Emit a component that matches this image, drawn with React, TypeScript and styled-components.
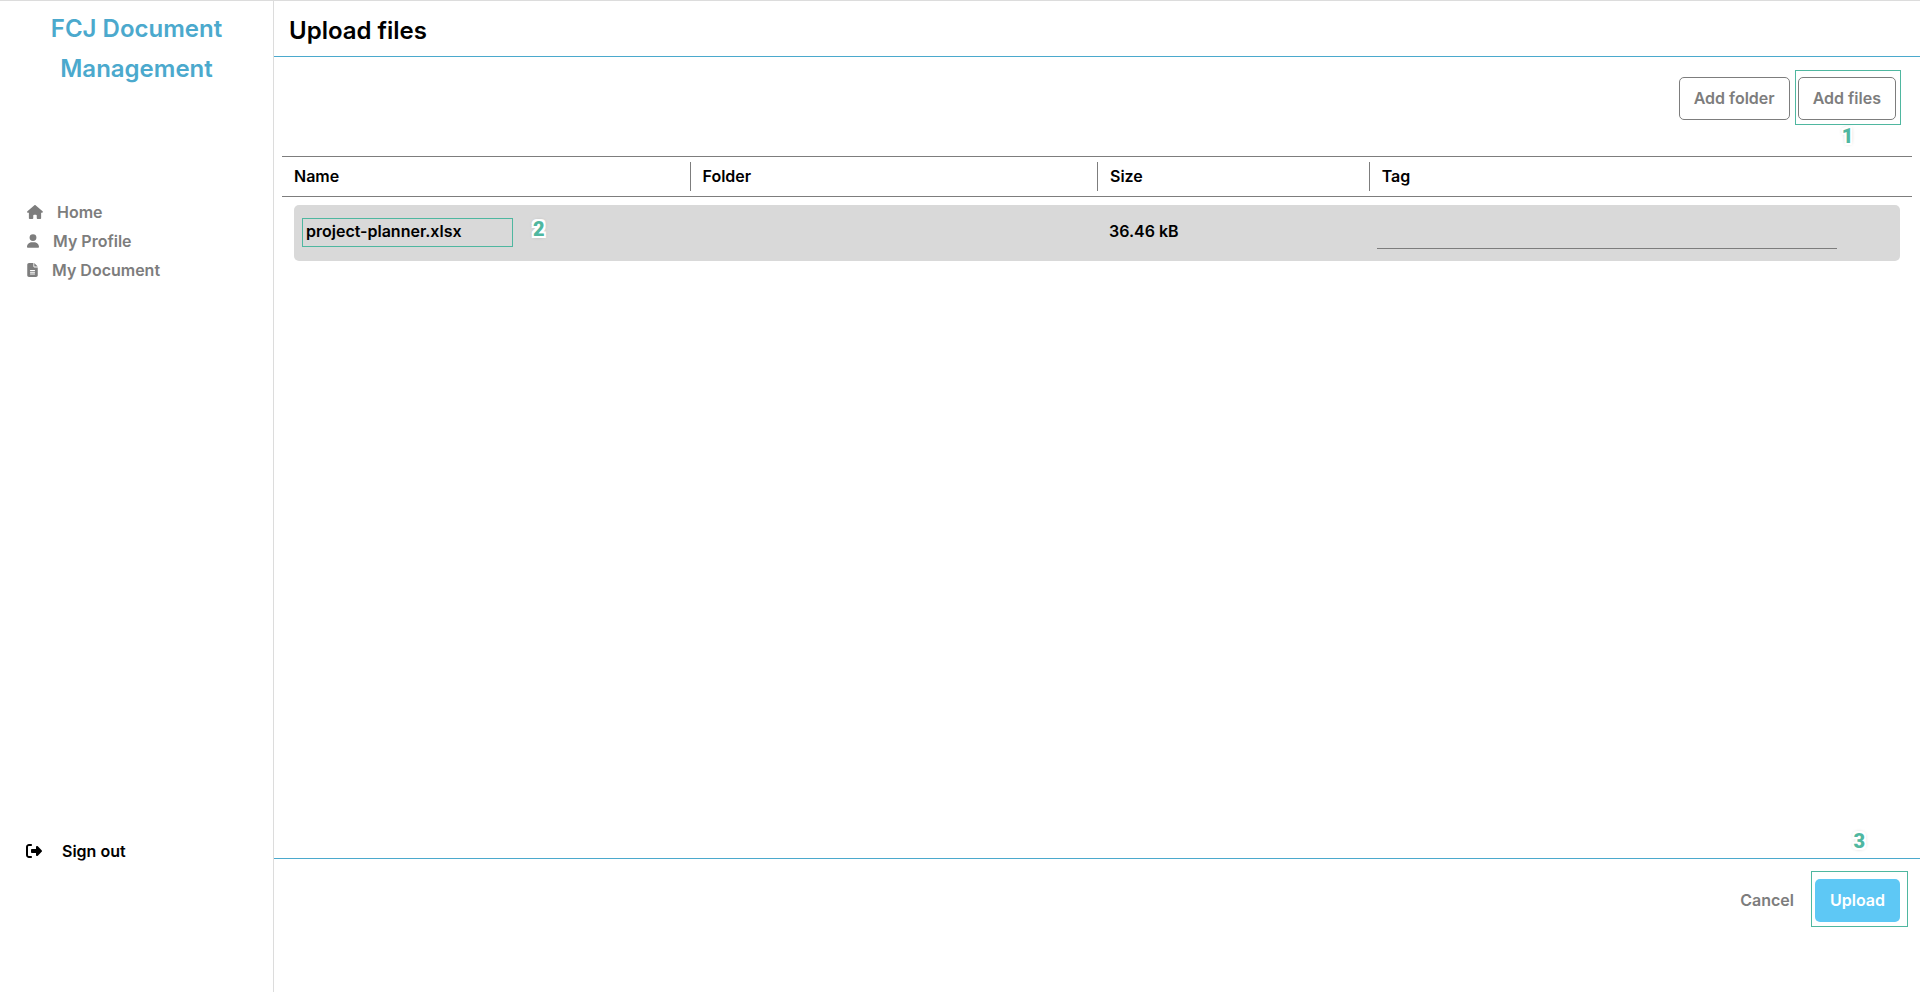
import React from 'react';
import styled, { createGlobalStyle } from 'styled-components';
import { FaHouse, FaUser, FaFileLines, FaRightFromBracket } from 'react-icons/fa6';

const GlobalStyle = createGlobalStyle`
  *, *::before, *::after { box-sizing: border-box; }
  body {
    margin: 0;
    background: #fff;
    color: #000;
    font-family: Inter, "Liberation Sans", sans-serif;
    font-size: 16px;
    font-weight: 600;
    line-height: 24px;
  }
  button, input { font: inherit; }
`;

const Page = styled.div`
  display: flex;
  min-height: 100vh;
  padding-bottom: 10px;
  border-top: 1px solid #dcdcdc;
`;

const Sidebar = styled.aside`
  flex: 0 0 274px;
  display: flex;
  flex-direction: column;
  border-right: 1px solid #dcdcdc;
  padding: 8px 26px 129px;
`;

const Brand = styled.h1`
  margin: 0;
  font-size: 24px;
  line-height: 40px;
  font-weight: 600;
  text-align: center;
  color: #4ba9cd;
`;

const Nav = styled.nav`
  flex: 1;
  display: flex;
  flex-direction: column;
  gap: 5px;
  margin-top: 111px;
  padding: 0 1px;
`;

const NavLink = styled.a<{ $icon: number }>`
  display: flex;
  align-items: center;
  gap: 14px;
  color: #7d7d7d;
  text-decoration: none;
  svg { width: ${(p) => p.$icon}px; height: 14px; }
`;

const SignOut = styled.a`
  display: flex;
  align-items: center;
  gap: 20px;
  color: #000;
  text-decoration: none;
  svg { width: 16px; height: 16px; }
`;

const Main = styled.main`
  flex: 1;
  min-width: 0;
  display: flex;
  flex-direction: column;
`;

const TitleBar = styled.header`
  padding: 12px 15px 7px;
  border-bottom: 1px solid #4ba9cd;
`;

const Title = styled.h2`
  margin: 0;
  font-size: 24px;
  line-height: 36px;
  font-weight: 600;
`;

const Toolbar = styled.div`
  display: flex;
  justify-content: flex-end;
  gap: 8px;
  padding: 20px 24px 36px;
`;

const Button = styled.button<{ $kind: 'outline' | 'plain' | 'solid' }>`
  height: 43px;
  padding: 0 14px 2px;
  border: 1px solid ${(p) => (p.$kind === 'outline' ? '#7d7d7d' : 'transparent')};
  border-radius: 5px;
  background: ${(p) => (p.$kind === 'solid' ? '#5ec8f5' : 'transparent')};
  color: ${(p) => (p.$kind === 'solid' ? '#fff' : '#7d7d7d')};
  cursor: pointer;
`;

const Marked = styled.div`
  position: relative;
  display: flex;
`;

const Frame = styled.span<{ $top: number; $right: number; $bottom: number; $left: number }>`
  position: absolute;
  top: -${(p) => p.$top}px;
  right: -${(p) => p.$right}px;
  bottom: -${(p) => p.$bottom}px;
  left: -${(p) => p.$left}px;
  border: 1px solid #4fb7a0;
  pointer-events: none;
`;

const Step = styled.span<{ $place: 'below' | 'above' | 'beside' }>`
  position: absolute;
  ${(p) => p.$place === 'below' && 'top: 100%; left: 50%; margin: 4px 0 0 -5px;'}
  ${(p) => p.$place === 'above' && 'bottom: 100%; left: 50%; margin: 0 0 26px -4px;'}
  ${(p) => p.$place === 'beside' && 'top: 0; left: 100%; margin: -2px 0 0 24px;'}
  font-family: Roboto, "Liberation Sans", sans-serif;
  font-size: 20px;
  font-weight: 900;
  color: #4fb7a0;
  text-shadow:
    2px 0 #fff, -2px 0 #fff, 0 2px #fff, 0 -2px #fff,
    2px 2px #fff, -2px 2px #fff, 2px -2px #fff, -2px -2px #fff,
    0 0 4px #888;
`;

const TableWrap = styled.div`
  flex: 1;
  padding: 0 8px;
`;

const Table = styled.table`
  display: block;
  width: 100%;
`;

const Head = styled.thead`
  display: block;
  padding: 5px 0;
  border-top: 1px solid #7d7d7d;
  border-bottom: 1px solid #7d7d7d;
`;

const Body = styled.tbody`
  display: block;
  padding: 8px 12px;
`;

const Row = styled.tr<{ $filled?: boolean }>`
  display: grid;
  grid-template-columns: 3fr 3fr 2fr 4fr;
  border-radius: 5px;
  background: ${(p) => (p.$filled ? '#d9d9d9' : 'transparent')};
`;

const HeadCell = styled.th`
  padding: 2px 12px 3px;
  text-align: left;
  font-weight: 600;
  & + & { border-left: 1px solid #7d7d7d; }
`;

const Cell = styled.td`
  height: 56px;
  padding: 14px 12px 12px;
`;

const FileName = styled.div`
  position: relative;
  width: 203px;
`;

const TagInput = styled.input`
  display: block;
  width: 90%;
  height: 30px;
  padding: 0 8px;
  border: 0;
  border-bottom: 1px solid #7d7d7d;
  background: transparent;
  outline: none;
`;

const Footer = styled.footer`
  display: flex;
  justify-content: flex-end;
  gap: 6px;
  padding: 20px 20px 70px;
  border-top: 1px solid #4ba9cd;
`;

export default function App() {
  return (
    <>
      <GlobalStyle />
      <Page>
        <Sidebar>
          <Brand>FCJ Document Management</Brand>
          <Nav>
            <NavLink $icon={16} href="#home"><FaHouse />Home</NavLink>
            <NavLink $icon={12} href="#profile"><FaUser />My Profile</NavLink>
            <NavLink $icon={11} href="#documents"><FaFileLines />My Document</NavLink>
          </Nav>
          <SignOut href="#signout"><FaRightFromBracket />Sign out</SignOut>
        </Sidebar>
        <Main>
          <TitleBar><Title>Upload files</Title></TitleBar>
          <Toolbar>
            <Button type="button" $kind="outline">Add folder</Button>
            <Marked>
              <Button type="button" $kind="outline">Add files</Button>
              <Frame $top={7} $right={5} $bottom={5} $left={3} />
              <Step $place="below">1</Step>
            </Marked>
          </Toolbar>
          <TableWrap>
            <Table>
              <Head>
                <Row>
                  <HeadCell scope="col">Name</HeadCell>
                  <HeadCell scope="col">Folder</HeadCell>
                  <HeadCell scope="col">Size</HeadCell>
                  <HeadCell scope="col">Tag</HeadCell>
                </Row>
              </Head>
              <Body>
                <Row $filled>
                  <Cell>
                    <FileName>
                      project-planner.xlsx
                      <Frame $top={1} $right={4} $bottom={4} $left={4} />
                      <Step $place="beside">2</Step>
                    </FileName>
                  </Cell>
                  <Cell />
                  <Cell>36.46 kB</Cell>
                  <Cell><TagInput type="text" aria-label="Tag" /></Cell>
                </Row>
              </Body>
            </Table>
          </TableWrap>
          <Footer>
            <Button type="button" $kind="plain">Cancel</Button>
            <Marked>
              <Button type="button" $kind="solid">Upload</Button>
              <Frame $top={8} $right={8} $bottom={5} $left={4} />
              <Step $place="above">3</Step>
            </Marked>
          </Footer>
        </Main>
      </Page>
    </>
  );
}
